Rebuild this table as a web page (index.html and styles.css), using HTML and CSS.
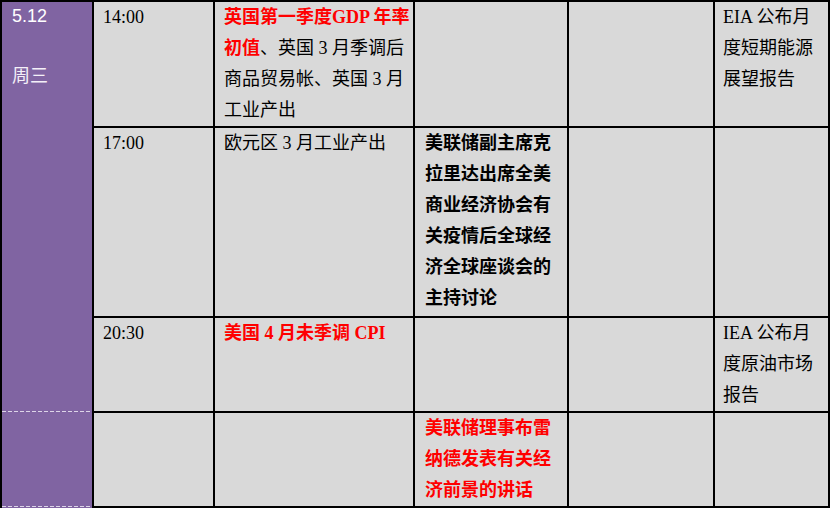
FILE: index.html
```html
<!DOCTYPE html>
<html lang="zh-CN">
<head>
<meta charset="utf-8">
<title>财经日历</title>
<link rel="stylesheet" href="styles.css">
</head>
<body>
<div class="sheet">
  <div class="day">
    <div class="day-main">
      <div class="date">5.12</div>
      <div class="weekday">周三</div>
    </div>
    <div class="day-foot"></div>
  </div>

  <div class="cell time">14:00</div>
  <div class="cell event"><span class="hl">英国第一季度GDP 年率初值</span>、英国 3 月季调后商品贸易帐、英国 3 月工业产出</div>
  <div class="cell speech"></div>
  <div class="cell"></div>
  <div class="cell note">EIA 公布月度短期能源展望报告</div>

  <div class="cell time">17:00</div>
  <div class="cell event">欧元区 3 月工业产出</div>
  <div class="cell speech strong">美联储副主席克拉里达出席全美商业经济协会有关疫情后全球经济全球座谈会的主持讨论</div>
  <div class="cell"></div>
  <div class="cell note"></div>

  <div class="cell time">20:30</div>
  <div class="cell event"><span class="hl">美国 4 月未季调 CPI</span></div>
  <div class="cell speech"></div>
  <div class="cell"></div>
  <div class="cell note">IEA 公布月度原油市场报告</div>

  <div class="cell time"></div>
  <div class="cell event"></div>
  <div class="cell speech strong red">美联储理事布雷纳德发表有关经济前景的讲话</div>
  <div class="cell"></div>
  <div class="cell note"></div>
</div>
</body>
</html>
```
FILE: styles.css
```css
html, body {
  margin: 0;
  padding: 0;
  background: #ffffff;
}

.sheet {
  width: 830px;
  height: 508px;
  box-sizing: border-box;
  padding: 2px;
  background: #000000;
  display: grid;
  grid-template-columns: 90px 119px 198px 152px 144px 113px;
  grid-template-rows: 124px 188px 93px 93px;
  gap: 2px;
  font-family: "Liberation Serif", "Noto Sans CJK SC", serif;
  font-size: 18px;
  line-height: 31px;
  color: #000000;
}

.day {
  grid-column: 1;
  grid-row: 1 / span 4;
  margin-bottom: -2px;
  background: #8064a2;
  display: flex;
  flex-direction: column;
  font-family: "Liberation Sans", "Noto Sans CJK SC", sans-serif;
  color: #ffffff;
  line-height: 29px;
}

.day-main {
  height: 409px;
  flex: 0 0 auto;
  padding-left: 10px;
}

.weekday {
  margin-top: 31px;
  color: #f4f0f8;
}

.day-foot {
  flex: 1;
  background-image:
    repeating-linear-gradient(90deg, #ddd5e8 0 4px, transparent 4px 6px),
    repeating-linear-gradient(90deg, #ddd5e8 0 4px, transparent 4px 6px);
  background-size: 100% 1px, 100% 1px;
  background-position: 0 0, 0 95px;
  background-repeat: no-repeat;
}

.cell {
  background: #d9d9d9;
  padding: 0 10px 0 9px;
  overflow: hidden;
}

.time {
  padding-left: 9px;
}

.event {
  padding-right: 0;
}

.speech {
  padding-left: 10px;
}

.note {
  padding-left: 8px;
  padding-right: 0;
}

.hl {
  color: #ff0000;
  font-weight: bold;
}

.strong {
  font-weight: bold;
}

.red {
  color: #ff0000;
}
```
